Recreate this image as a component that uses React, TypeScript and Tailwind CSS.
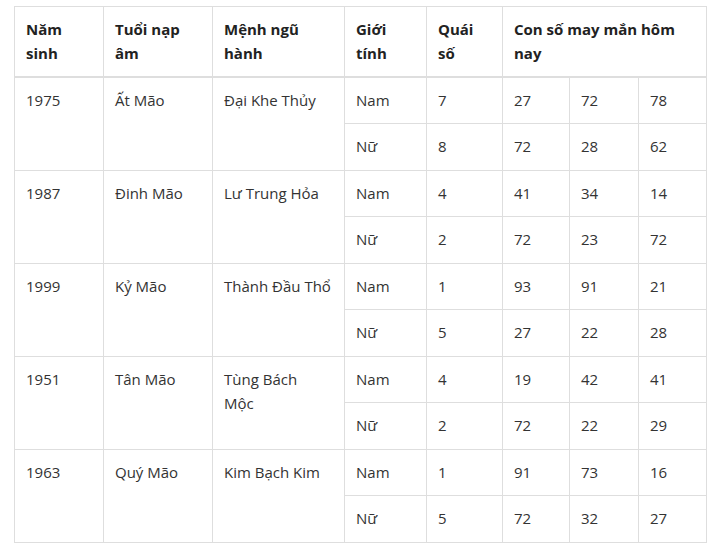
const rows = [
  { year: "1975", tuoi: "Ất Mão", menh: ["Đại Khe Thủy"], nam: ["7", "27", "72", "78"], nu: ["8", "72", "28", "62"] },
  { year: "1987", tuoi: "Đinh Mão", menh: ["Lư Trung Hỏa"], nam: ["4", "41", "34", "14"], nu: ["2", "72", "23", "72"] },
  { year: "1999", tuoi: "Kỷ Mão", menh: ["Thành Đầu Thổ"], nam: ["1", "93", "91", "21"], nu: ["5", "27", "22", "28"] },
  { year: "1951", tuoi: "Tân Mão", menh: ["Tùng Bách", "Mộc"], nam: ["4", "19", "42", "41"], nu: ["2", "72", "22", "29"] },
  { year: "1963", tuoi: "Quý Mão", menh: ["Kim Bạch Kim"], nam: ["1", "91", "73", "16"], nu: ["5", "72", "32", "27"] },
]

const th = "border border-[#dedede] px-[11px] pt-[10px] pb-[11px] text-left align-top font-bold text-[#222]"
const td = "border border-[#dedede] px-[11px] pt-[10px] pb-0 align-top"

export default function App() {
  return (
    <div className="bg-white w-[713px] h-[547px] pt-[6px] pl-[14px] font-['Open_Sans',sans-serif] text-[15px] leading-[24px] text-[#333]">
      <table className="table-fixed border-collapse w-[692px]">
        <colgroup>
          <col className="w-[89px]" />
          <col className="w-[109px]" />
          <col className="w-[132px]" />
          <col className="w-[82px]" />
          <col className="w-[76px]" />
          <col className="w-[67px]" />
          <col className="w-[69px]" />
          <col className="w-[68px]" />
        </colgroup>
        <thead>
          <tr className="border-b-2 border-[#dedede]">
            <th className={th}>Năm sinh</th>
            <th className={th}>Tuổi nạp âm</th>
            <th className={th}>Mệnh ngũ hành</th>
            <th className={th}>Giới tính</th>
            <th className={th}>Quái số</th>
            <th className={th} colSpan={3}>Con số may mắn hôm nay</th>
          </tr>
        </thead>
        <tbody>
          {rows.map((r) => (
            <>
              <tr key={r.year + "a"} className="h-[46px]">
                <td className={td} rowSpan={2}>{r.year}</td>
                <td className={td} rowSpan={2}>{r.tuoi}</td>
                <td className={td} rowSpan={2}>
                  {r.menh.map((m, i) => (
                    <div key={i}>{m}</div>
                  ))}
                </td>
                <td className={td}>Nam</td>
                {r.nam.map((n, i) => (
                  <td key={i} className={td}>{n}</td>
                ))}
              </tr>
              <tr key={r.year + "b"} className="h-[47px]">
                <td className={td}>Nữ</td>
                {r.nu.map((n, i) => (
                  <td key={i} className={td}>{n}</td>
                ))}
              </tr>
            </>
          ))}
        </tbody>
      </table>
    </div>
  )
}
